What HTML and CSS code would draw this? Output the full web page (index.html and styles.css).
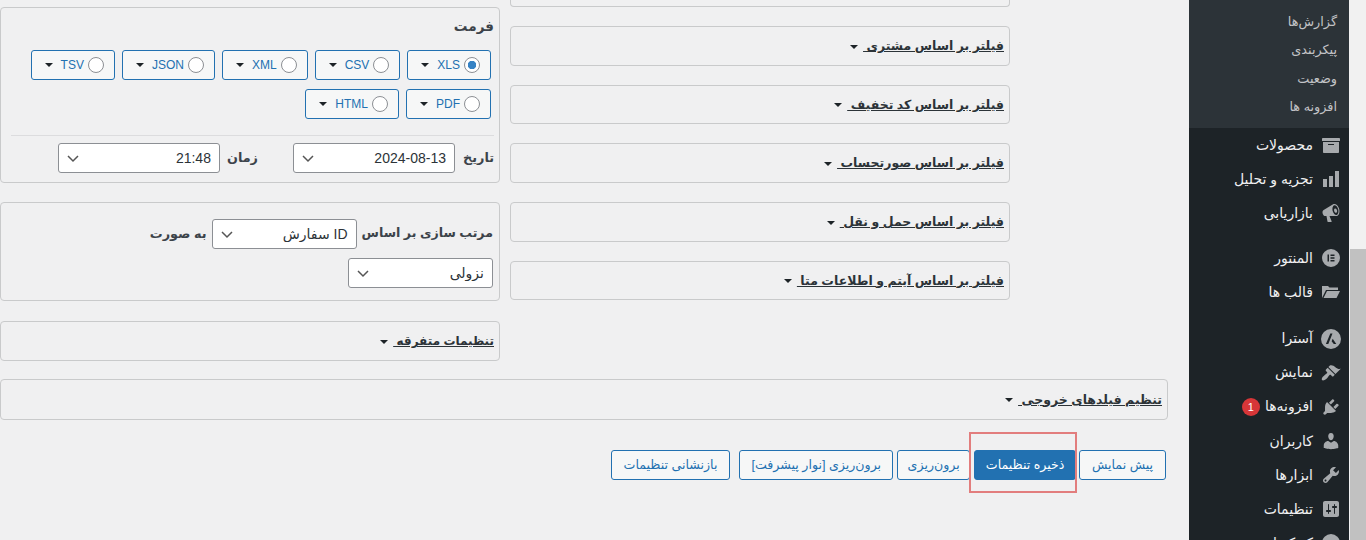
FILE: index.html
```html
<!DOCTYPE html>
<html lang="fa" dir="rtl">
<head>
<meta charset="utf-8">
<title>تنظیمات برون‌ریزی</title>
<link rel="stylesheet" href="styles.css">
</head>
<body>
<div class="page">
  <div class="scrollbar"><div class="thumb"></div></div>

  <nav class="sidebar">
    <ul class="submenu">
      <li>گزارش‌ها</li>
      <li>پیکربندی</li>
      <li>وضعیت</li>
      <li>افزونه ها</li>
    </ul>
    <ul class="menu">
      <li><svg class="ic" viewBox="0 0 20 20"><path d="M19 4v2H1V4c0-.55.45-1 1-1h16c.55 0 1 .45 1 1zM2 7h16v10c0 .55-.45 1-1 1H3c-.55 0-1-.45-1-1V7zm11 3V9H7v1h6z"/></svg><span>محصولات</span></li>
      <li><svg class="ic" viewBox="0 0 20 20"><path d="M18 18V2h-4v16h4zm-6 0V7H8v11h4zm-6 0v-8H2v8h4z"/></svg><span>تجزیه و تحلیل</span></li>
      <li><svg class="ic" viewBox="0 0 20 20"><path fill-rule="evenodd" d="M18.15 5.94c.46 1.62.38 3.22-.02 4.48-.42 1.28-1.26 2.18-2.3 2.48-.16.06-.26.06-.4.06-.06.02-.12.02-.18.02-.06.02-.14.02-.22.02H8.5l2.22 5.5c.02.14-.06.26-.14.34-.08.1-.24.16-.34.16H6.95c-.1 0-.26-.06-.34-.16-.08-.08-.16-.2-.14-.34l-1-5.5H4.25c-.5.06-1.08-.18-1.54-.62s-.88-1.08-1.06-1.88c-.24-.8-.2-1.56-.02-2.2.2-.62.58-1.08 1.06-1.3l9.02-5.42c.1-.06.18-.1.24-.16.06-.04.14-.08.24-.12.16-.08.28-.12.44-.18 1.04-.3 2.24.1 3.22.98s1.84 2.24 2.32 3.86zm-2.58 5.98c.4-.1.74-.34 1.04-.7.58-.7.86-1.76.86-3.04 0-.64-.1-1.3-.28-1.98-.34-1.36-1.02-2.5-1.78-3.24-.68-.64-1.42-.94-2.1-.74-.42.12-.76.38-1.06.76-.56.7-.84 1.76-.84 3.02 0 .66.1 1.32.26 1.98.38 1.36 1.04 2.48 1.8 3.24.75.67 1.45.92 2.1.7zM14 5.5c1-.3 1.7.6 2 1.8.3 1.2 0 2.3-.8 2.5-.9.2-1.7-.7-2-1.9-.3-1.2 0-2.2.8-2.4z"/></svg><span>بازاریابی</span></li>
    </ul>
    <ul class="menu menu-gap">
      <li><svg class="ic" viewBox="0 0 20 20"><path fill-rule="evenodd" d="M10 1a9 9 0 1 0 0 18 9 9 0 0 0 0-18zM6.500 6.500H8v7H6.500zM9.500 6.500h4V8h-4zM9.500 9.250h4v1.500h-4zM9.500 12h4v1.500h-4z"/></svg><span>المنتور</span></li>
      <li><svg class="ic" viewBox="0 0 20 20"><path d="M1 4h6l1.500 1.500H17V8H5l-4 8V4zm5 5h13l-3.500 7h-13L6 9z"/></svg><span>قالب ها</span></li>
    </ul>
    <ul class="menu menu-gap2">
      <li><svg class="ic" viewBox="0 0 20 20"><path fill-rule="evenodd" d="M10 0a10 10 0 1 0 0 20 10 10 0 0 0 0-20zM9.300 4.500h2.200L7.300 15H4.900zM11.700 9.800l3.600 5.200h-2.500l-2.200-2.800z"/></svg><span>آسترا</span></li>
      <li><svg class="ic" viewBox="0 0 20 20"><path d="M14.480 11.060L7.410 3.990l1.500-1.500c.5-.56 2.300-.47 3.510.32 1.210.8 1.430 1.280 2.910 2.100 1.180.64 2.450 1.260 4.450.85zm-.71.71L6.700 4.700 4.930 6.470c-.39.39-.39 1.020 0 1.410l1.060 1.060c.39.39.39 1.030 0 1.420-.6.6-1.430 1.110-2.210 1.690-.35.26-.7.530-1.010.84C1.430 13.710 0 16.060 1.050 17.120c.99.990 3.710-.5 5.010-1.840.27-.27.530-.61.790-.96.580-.78 1.090-1.610 1.690-2.210.39-.39 1.020-.39 1.410 0l1.060 1.060c.39.39 1.020.39 1.410 0z"/></svg><span>نمایش</span></li>
      <li><svg class="ic" viewBox="0 0 20 20"><path d="M13.110 4.360L9.870 7.600 8 5.730l3.240-3.240c.35-.34 1.050-.2 1.560.32.52.51.66 1.210.31 1.550zm-8 1.770l.91-1.120 9.010 9.010-1.190.84c-.71.71-2.630 1.160-3.820 1.160H6.140L4.900 17.260c-.59.59-1.540.59-2.120 0-.59-.58-.59-1.530 0-2.120l1.240-1.240v-3.880c0-1.130.4-3.190 1.090-3.890zm7.260 3.970l3.240-3.240c.34-.35 1.040-.21 1.550.31.52.51.66 1.210.31 1.550l-3.240 3.250z"/></svg><span>افزونه‌ها</span><b class="badge">1</b></li>
      <li><svg class="ic" viewBox="0 0 20 20"><path d="M10 9.250c-2.270 0-2.730-3.440-2.730-3.440C7 4.020 7.820 2 9.970 2c2.160 0 2.980 2.020 2.710 3.810 0 0-.41 3.440-2.680 3.440zm0 2.570L12.720 10c2.390 0 4.520 2.330 4.520 4.530v2.490s-3.650 1.130-7.240 1.130c-3.650 0-7.240-1.130-7.240-1.130v-2.490c0-2.250 1.940-4.480 4.470-4.480z"/></svg><span>کاربران</span></li>
      <li><svg class="ic" viewBox="0 0 20 20"><path fill-rule="evenodd" d="M16.680 9.770c-1.340 1.340-3.300 1.670-4.950.99l-5.410 6.520c-.99.99-2.590.99-3.580 0s-.99-2.590 0-3.570l6.520-5.420c-.68-1.650-.35-3.610.99-4.950 1.280-1.280 3.120-1.620 4.720-1.060l-2.890 2.890 2.820 2.820 2.860-2.870c.53 1.580.18 3.390-1.080 4.670zM3.810 16.210c.4.39 1.040.39 1.430 0 .4-.4.4-1.040 0-1.430-.39-.4-1.030-.4-1.430 0-.39.39-.39 1.030 0 1.430z"/></svg><span>ابزارها</span></li>
      <li><svg class="ic" viewBox="0 0 20 20"><path fill-rule="evenodd" d="M18 16V4c0-1.100-.9-2-2-2H4c-1.100 0-2 .9-2 2v12c0 1.100.9 2 2 2h12c1.100 0 2-.9 2-2zM8 11h1c.55 0 1 .45 1 1s-.45 1-1 1H8v1.500c0 .28-.22.5-.5.5s-.5-.22-.5-.5V13H6c-.55 0-1-.45-1-1s.45-1 1-1h1V5.500c0-.28.22-.5.5-.5s.5.22.5.5V11zm5-2h-1c-.55 0-1-.45-1-1s.45-1 1-1h1V5.500c0-.28.22-.5.5-.5s.5.22.5.5V7h1c.55 0 1 .45 1 1s-.45 1-1 1h-1v5.500c0 .28-.22.5-.5.5s-.5-.22-.5-.5V9z"/></svg><span>تنظیمات</span></li>
      <li><svg class="ic" viewBox="0 0 20 20"><circle cx="10" cy="10" r="9"/></svg><span>کد کوتاه</span></li>
    </ul>
  </nav>

  <main class="content">
    <div class="columns">
      <div class="col">
        <div class="panel panel-stub"></div>
        <div class="panel panel-h"><a class="toggle">فیلتر بر اساس مشتری </a><i class="caret"></i></div>
        <div class="panel panel-h"><a class="toggle">فیلتر بر اساس کد تخفیف </a><i class="caret"></i></div>
        <div class="panel panel-h"><a class="toggle">فیلتر بر اساس صورتحساب </a><i class="caret"></i></div>
        <div class="panel panel-h"><a class="toggle">فیلتر بر اساس حمل و نقل </a><i class="caret"></i></div>
        <div class="panel panel-h"><a class="toggle">فیلتر بر اساس آیتم و اطلاعات متا </a><i class="caret"></i></div>
      </div>
      <div class="col col-left">
        <section class="panel format">
          <div class="title">فرمت</div>
          <div class="formats">
            <label class="fmt"><input type="radio" name="f" checked><span>XLS</span><i class="caret"></i></label>
            <label class="fmt"><input type="radio" name="f"><span>CSV</span><i class="caret"></i></label>
            <label class="fmt"><input type="radio" name="f"><span>XML</span><i class="caret"></i></label>
            <label class="fmt"><input type="radio" name="f"><span>JSON</span><i class="caret"></i></label>
            <label class="fmt"><input type="radio" name="f"><span>TSV</span><i class="caret"></i></label>
            <label class="fmt"><input type="radio" name="f"><span>PDF</span><i class="caret"></i></label>
            <label class="fmt"><input type="radio" name="f"><span>HTML</span><i class="caret"></i></label>
          </div>
          <div class="datetime">
            <span class="lbl lbl-date">تاریخ</span>
            <select class="sel sel-date"><option>2024-08-13</option></select>
            <span class="lbl lbl-time">زمان</span>
            <select class="sel sel-date"><option>21:48</option></select>
          </div>
        </section>
        <section class="panel sort">
          <div class="sort-row">
            <span class="lbl lbl-sort">مرتب سازی بر اساس</span>
            <select class="sel sel-sort"><option>ID سفارش</option></select>
            <span class="lbl">به صورت</span>
          </div>
          <select class="sel sel-sort"><option>نزولی</option></select>
        </section>
        <div class="panel panel-h panel-misc"><a class="toggle">تنظیمات متفرقه </a><i class="caret"></i></div>
      </div>
    </div>
    <div class="panel panel-h panel-wide"><a class="toggle">تنظیم فیلدهای خروجی </a><i class="caret"></i></div>
    <div class="actions">
      <button class="btn btn-wide">پیش نمایش</button>
      <button class="btn btn-primary">ذخیره تنظیمات</button>
      <button class="btn btn-narrow">برون‌ریزی</button>
      <button class="btn">برون‌ریزی [نوار پیشرفت]</button>
      <button class="btn btn-wide btn-reset">بازنشانی تنظیمات</button>
    </div>
  </main>
</div>
</body>
</html>
```
FILE: styles.css
```css
* { box-sizing: border-box; }
html, body { margin: 0; height: 540px; overflow: hidden; }
body {
  background: #f0f0f1;
  color: #3c434a;
  font: 13px/1.4 "Liberation Sans", "DejaVu Sans", sans-serif;
}
ul { list-style: none; margin: 0; padding: 0; }

.page { display: flex; height: 540px; overflow: hidden; }

.scrollbar { flex: 0 0 16px; background: #f1f1f1; padding-top: 249px; }
.thumb { height: 291px; background: #c1c1c1; }

.sidebar { flex: 0 0 160px; margin-right: 1px; background: #1d2327; height: 540px; overflow: hidden; color: #f0f0f1; }
.submenu { background: #2c3338; height: 128px; padding-top: 8px; color: #c3c4c7; }
.submenu li { height: 28.400px; line-height: 28px; padding-right: 12px; font-size: 12.800px; }
.menu li { display: flex; align-items: center; height: 34.100px; padding-right: 8px; gap: 8px; font-size: 14px; padding-top: 1px; }
.menu .ic { margin-top: -1px; }
.menu-gap { margin-top: 11px; }
.menu-gap2 { margin-top: 12px; }
.ic { width: 20px; height: 20px; fill: #a7aaad; flex: none; }
.badge {
  width: 18px; height: 18px; border-radius: 50%;
  background: #d63638; color: #fff;
  font: 400 11px/18px "Liberation Sans", sans-serif;
  text-align: center; margin-right: -3px;
}

.content { flex: 0 0 1168px; margin-right: 21px; }
.columns { display: flex; margin-right: 158px; gap: 10px; }
.col { width: 500px; display: flex; flex-direction: column; gap: 19px; }
.col-left { padding-top: 7.300px; }

.panel { border: 1px solid #c9cacb; border-radius: 4px; }
.panel-stub { height: 7px; border-top: 0; border-radius: 0 0 4px 4px; }
.panel-h { height: 39.670px; display: flex; align-items: center; padding: 2px 5px 0; gap: 5px; }
.panel-misc { height: 40px; margin-top: .6px; }
.panel-misc .toggle { font-size: 12px; }
.panel-wide { height: 41px; margin-top: 18px; width: 1168px; }
.toggle { color: #2c3338; text-decoration: underline; font-weight: 700; white-space: pre; font-size: 12.500px; }
.caret { width: 0; height: 0; border: 4px solid transparent; border-top: 4px solid #1d2327; border-bottom: 0; flex: none; }

.format { height: 176px; padding: 0 5px; }
.title { font-weight: 700; font-size: 13.600px; color: #3c434a; height: 42px; line-height: 38px; }
.formats { display: flex; flex-wrap: wrap; gap: 9px 7px; padding: 0 3px 16px 0; border-bottom: 1px solid #dcdcde; margin-left: 5px; }
.fmt {
  display: flex; align-items: center; height: 30px;
  padding: 0 10px 0 13px;
  border: 1px solid #2271b1; border-radius: 3px; background: #f6f7f7;
  color: #2271b1; font-size: 12px;
}
.fmt span { padding-top: 1px; }
.fmt input {
  appearance: none; width: 16px; height: 16px; margin: 0 0 0 4px; border-radius: 50%;
  border: 1px solid #8c8f94; background: #fff;
}
.fmt input:checked { background: radial-gradient(circle, #3582c4 0 4px, #fff 4.500px); }
.fmt .caret { margin-right: 8px; }

.lbl { font-weight: 700; color: #3c434a; white-space: nowrap; font-size: 12.800px; }
.lbl-date { margin-left: 3px; }
.lbl-time { margin: 0 30px 0 2px; }
.lbl-sort { font-size: 12.600px; }
.sel {
  appearance: none; height: 30px; border: 1px solid #8c8f94; border-radius: 3px;
  font: 14px "Liberation Sans", "DejaVu Sans", sans-serif; color: #2c3338;
  padding: 0 8px 0 24px;
  background: #fff url("data:image/svg+xml,%3Csvg xmlns='http://www.w3.org/2000/svg' width='16' height='16'%3E%3Cpath d='M3 6l5 5 5-5' fill='none' stroke='%23555' stroke-width='1.500'/%3E%3C/svg%3E") no-repeat left 6px center;
}
.datetime { display: flex; align-items: center; gap: 5px; margin-top: 7px; }
.sel-date { width: 162px; }

.sort { height: 99px; padding: 16px 6px 0; display: flex; flex-direction: column; align-items: flex-start; gap: 9px; }
.sort-row { display: flex; align-items: center; gap: 5px; }
.sel-sort { width: 145px; }

.actions { display: flex; gap: 4px; margin-top: 30px; padding-right: 2px; }
.btn {
  height: 30px; padding: 0 11px; font: 12.600px "Liberation Sans", "DejaVu Sans", sans-serif;
  border: 1px solid #2271b1; border-radius: 3px; background: #f6f7f7; color: #2271b1;
}
.btn-wide { padding: 0 12px; }
.btn-narrow { padding: 0 9.500px; }
.btn-primary { position: relative; background: #2271b1; color: #fff; margin-right: -1px; padding: 0 10.500px; }
.btn-primary::after {
  content: ""; position: absolute; inset: -19px -2px -14px -6px;
  border: 2px solid #e27d7d;
}
.btn-reset { margin-right: 5px; }
```
